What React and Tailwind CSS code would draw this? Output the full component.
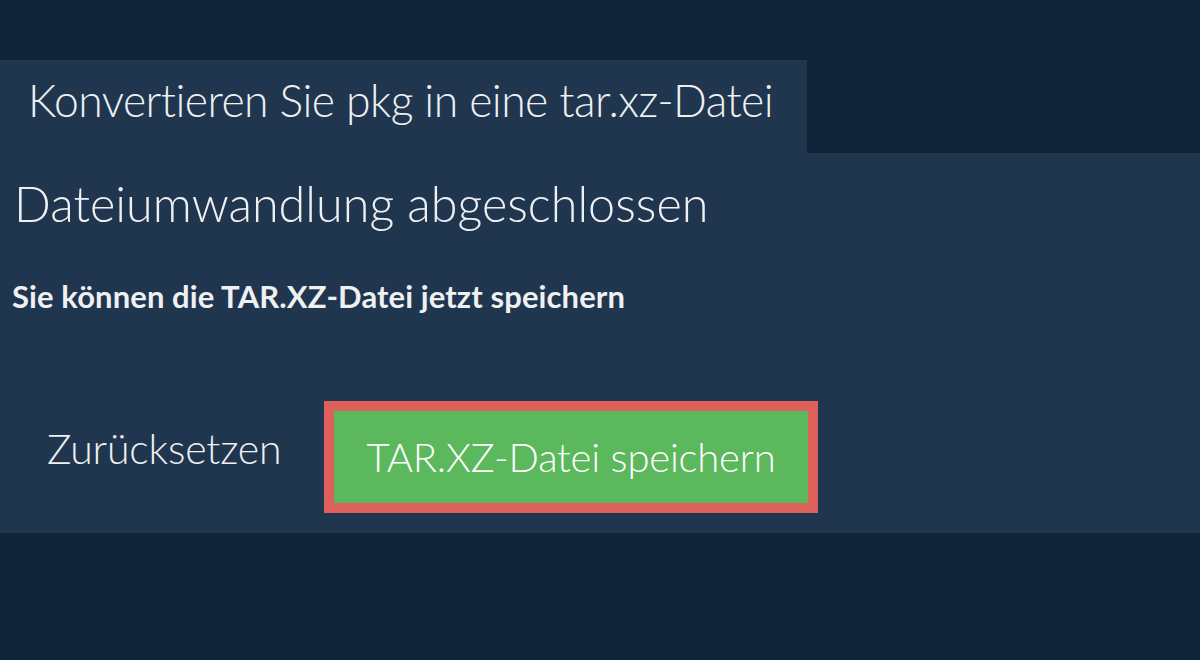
export default function App() {
  return (
    <div className="w-[1200px] h-[660px] bg-[#0f2339] text-[#eef0f2] flex flex-col" style={{ fontFamily: "Lato, 'Noto Sans', sans-serif" }}>
      <div className="h-[60px]" />
      <div className="w-[807px] h-[93px] bg-[#20364f] pl-[28px] pt-[18px]">
        <div className="text-[44.5px] font-light leading-none whitespace-nowrap tracking-[-0.55px]">Konvertieren Sie pkg in eine tar.xz-Datei</div>
      </div>
      <div className="h-[380px] bg-[#20364f] flex flex-col">
        <div className="pl-[14px] pt-[26px] text-[48.5px] font-light leading-none whitespace-nowrap">Dateiumwandlung abgeschlossen</div>
        <div className="pl-[12px] pt-[53px] text-[31px] font-bold leading-none whitespace-nowrap tracking-[0.1px]">Sie können die TAR.XZ-Datei jetzt speichern</div>
        <div className="flex items-start mt-[89px]">
          <div className="w-[324px] pl-[47px] pt-[27px] text-[41px] font-light leading-none whitespace-nowrap tracking-[-0.15px]">Zurücksetzen</div>
          <div className="w-[494px] h-[112px] border-[10px] border-[#de605b] bg-[#5cb85c] flex items-center justify-center">
            <span className="text-[40px] font-light leading-none text-white whitespace-nowrap tracking-[-0.2px]">TAR.XZ-Datei speichern</span>
          </div>
        </div>
      </div>
    </div>
  );
}
